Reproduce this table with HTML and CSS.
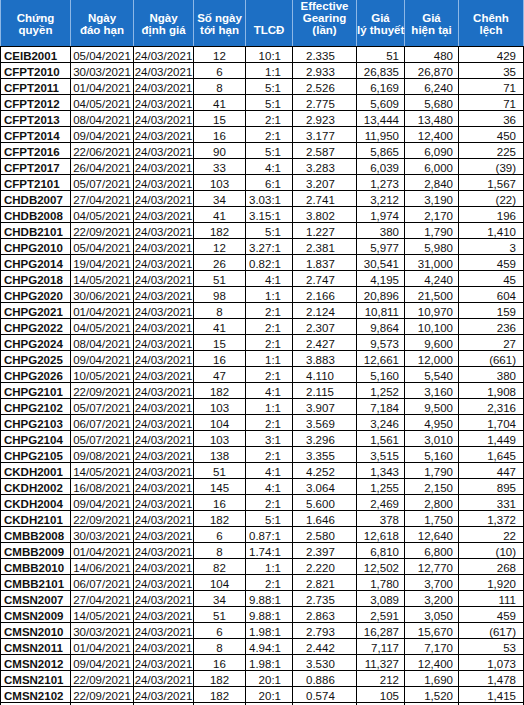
FILE: index.html
```html
<!DOCTYPE html>
<html lang="vi">
<head>
<meta charset="utf-8">
<title>Chứng quyền</title>
<link rel="stylesheet" href="styles.css">
</head>
<body>
<table class="cw">
<colgroup>
<col class="c1"><col class="c2"><col class="c3"><col class="c4"><col class="c5"><col class="c6"><col class="c7"><col class="c8"><col class="c9">
</colgroup>
<thead>
<tr>
<th>Chứng<br>quyền</th>
<th>Ngày<br>đáo hạn</th>
<th>Ngày<br>định giá</th>
<th>Số ngày<br>tới hạn</th>
<th>TLCĐ</th>
<th>Effective<br>Gearing<br>(lần)</th>
<th>Giá<br>lý thuyết</th>
<th>Giá<br>hiện tại</th>
<th>Chênh<br>lệch</th>
</tr>
</thead>
<tbody>
<tr><td class="code">CEIB2001</td><td class="ctr">05/04/2021</td><td class="ctr">24/03/2021</td><td class="ctr">12</td><td class="ratio">10:1</td><td class="gear">2.335</td><td class="num">51</td><td class="num">480</td><td class="num diff">429</td></tr>
<tr><td class="code">CFPT2010</td><td class="ctr">30/03/2021</td><td class="ctr">24/03/2021</td><td class="ctr">6</td><td class="ratio">1:1</td><td class="gear">2.933</td><td class="num">26,835</td><td class="num">26,870</td><td class="num diff">35</td></tr>
<tr><td class="code">CFPT2011</td><td class="ctr">01/04/2021</td><td class="ctr">24/03/2021</td><td class="ctr">8</td><td class="ratio">5:1</td><td class="gear">2.526</td><td class="num">6,169</td><td class="num">6,240</td><td class="num diff">71</td></tr>
<tr><td class="code">CFPT2012</td><td class="ctr">04/05/2021</td><td class="ctr">24/03/2021</td><td class="ctr">41</td><td class="ratio">5:1</td><td class="gear">2.775</td><td class="num">5,609</td><td class="num">5,680</td><td class="num diff">71</td></tr>
<tr><td class="code">CFPT2013</td><td class="ctr">08/04/2021</td><td class="ctr">24/03/2021</td><td class="ctr">15</td><td class="ratio">2:1</td><td class="gear">2.923</td><td class="num">13,444</td><td class="num">13,480</td><td class="num diff">36</td></tr>
<tr><td class="code">CFPT2014</td><td class="ctr">09/04/2021</td><td class="ctr">24/03/2021</td><td class="ctr">16</td><td class="ratio">2:1</td><td class="gear">3.177</td><td class="num">11,950</td><td class="num">12,400</td><td class="num diff">450</td></tr>
<tr><td class="code">CFPT2016</td><td class="ctr">22/06/2021</td><td class="ctr">24/03/2021</td><td class="ctr">90</td><td class="ratio">5:1</td><td class="gear">2.587</td><td class="num">5,865</td><td class="num">6,090</td><td class="num diff">225</td></tr>
<tr><td class="code">CFPT2017</td><td class="ctr">26/04/2021</td><td class="ctr">24/03/2021</td><td class="ctr">33</td><td class="ratio">4:1</td><td class="gear">3.283</td><td class="num">6,039</td><td class="num">6,000</td><td class="num diff">(39)</td></tr>
<tr><td class="code">CFPT2101</td><td class="ctr">05/07/2021</td><td class="ctr">24/03/2021</td><td class="ctr">103</td><td class="ratio">6:1</td><td class="gear">3.207</td><td class="num">1,273</td><td class="num">2,840</td><td class="num diff">1,567</td></tr>
<tr><td class="code">CHDB2007</td><td class="ctr">27/04/2021</td><td class="ctr">24/03/2021</td><td class="ctr">34</td><td class="ratio">3.03:1</td><td class="gear">2.741</td><td class="num">3,212</td><td class="num">3,190</td><td class="num diff">(22)</td></tr>
<tr><td class="code">CHDB2008</td><td class="ctr">04/05/2021</td><td class="ctr">24/03/2021</td><td class="ctr">41</td><td class="ratio">3.15:1</td><td class="gear">3.802</td><td class="num">1,974</td><td class="num">2,170</td><td class="num diff">196</td></tr>
<tr><td class="code">CHDB2101</td><td class="ctr">22/09/2021</td><td class="ctr">24/03/2021</td><td class="ctr">182</td><td class="ratio">5:1</td><td class="gear">1.227</td><td class="num">380</td><td class="num">1,790</td><td class="num diff">1,410</td></tr>
<tr><td class="code">CHPG2010</td><td class="ctr">05/04/2021</td><td class="ctr">24/03/2021</td><td class="ctr">12</td><td class="ratio">3.27:1</td><td class="gear">2.381</td><td class="num">5,977</td><td class="num">5,980</td><td class="num diff">3</td></tr>
<tr><td class="code">CHPG2014</td><td class="ctr">19/04/2021</td><td class="ctr">24/03/2021</td><td class="ctr">26</td><td class="ratio">0.82:1</td><td class="gear">1.837</td><td class="num">30,541</td><td class="num">31,000</td><td class="num diff">459</td></tr>
<tr><td class="code">CHPG2018</td><td class="ctr">14/05/2021</td><td class="ctr">24/03/2021</td><td class="ctr">51</td><td class="ratio">4:1</td><td class="gear">2.747</td><td class="num">4,195</td><td class="num">4,240</td><td class="num diff">45</td></tr>
<tr><td class="code">CHPG2020</td><td class="ctr">30/06/2021</td><td class="ctr">24/03/2021</td><td class="ctr">98</td><td class="ratio">1:1</td><td class="gear">2.166</td><td class="num">20,896</td><td class="num">21,500</td><td class="num diff">604</td></tr>
<tr><td class="code">CHPG2021</td><td class="ctr">01/04/2021</td><td class="ctr">24/03/2021</td><td class="ctr">8</td><td class="ratio">2:1</td><td class="gear">2.124</td><td class="num">10,811</td><td class="num">10,970</td><td class="num diff">159</td></tr>
<tr><td class="code">CHPG2022</td><td class="ctr">04/05/2021</td><td class="ctr">24/03/2021</td><td class="ctr">41</td><td class="ratio">2:1</td><td class="gear">2.307</td><td class="num">9,864</td><td class="num">10,100</td><td class="num diff">236</td></tr>
<tr><td class="code">CHPG2024</td><td class="ctr">08/04/2021</td><td class="ctr">24/03/2021</td><td class="ctr">15</td><td class="ratio">2:1</td><td class="gear">2.427</td><td class="num">9,573</td><td class="num">9,600</td><td class="num diff">27</td></tr>
<tr><td class="code">CHPG2025</td><td class="ctr">09/04/2021</td><td class="ctr">24/03/2021</td><td class="ctr">16</td><td class="ratio">1:1</td><td class="gear">3.883</td><td class="num">12,661</td><td class="num">12,000</td><td class="num diff">(661)</td></tr>
<tr><td class="code">CHPG2026</td><td class="ctr">10/05/2021</td><td class="ctr">24/03/2021</td><td class="ctr">47</td><td class="ratio">2:1</td><td class="gear">4.110</td><td class="num">5,160</td><td class="num">5,540</td><td class="num diff">380</td></tr>
<tr><td class="code">CHPG2101</td><td class="ctr">22/09/2021</td><td class="ctr">24/03/2021</td><td class="ctr">182</td><td class="ratio">4:1</td><td class="gear">2.115</td><td class="num">1,252</td><td class="num">3,160</td><td class="num diff">1,908</td></tr>
<tr><td class="code">CHPG2102</td><td class="ctr">05/07/2021</td><td class="ctr">24/03/2021</td><td class="ctr">103</td><td class="ratio">1:1</td><td class="gear">3.907</td><td class="num">7,184</td><td class="num">9,500</td><td class="num diff">2,316</td></tr>
<tr><td class="code">CHPG2103</td><td class="ctr">06/07/2021</td><td class="ctr">24/03/2021</td><td class="ctr">104</td><td class="ratio">2:1</td><td class="gear">3.569</td><td class="num">3,246</td><td class="num">4,950</td><td class="num diff">1,704</td></tr>
<tr><td class="code">CHPG2104</td><td class="ctr">05/07/2021</td><td class="ctr">24/03/2021</td><td class="ctr">103</td><td class="ratio">3:1</td><td class="gear">3.296</td><td class="num">1,561</td><td class="num">3,010</td><td class="num diff">1,449</td></tr>
<tr><td class="code">CHPG2105</td><td class="ctr">09/08/2021</td><td class="ctr">24/03/2021</td><td class="ctr">138</td><td class="ratio">2:1</td><td class="gear">3.355</td><td class="num">3,515</td><td class="num">5,160</td><td class="num diff">1,645</td></tr>
<tr><td class="code">CKDH2001</td><td class="ctr">14/05/2021</td><td class="ctr">24/03/2021</td><td class="ctr">51</td><td class="ratio">4:1</td><td class="gear">4.252</td><td class="num">1,343</td><td class="num">1,790</td><td class="num diff">447</td></tr>
<tr><td class="code">CKDH2002</td><td class="ctr">16/08/2021</td><td class="ctr">24/03/2021</td><td class="ctr">145</td><td class="ratio">4:1</td><td class="gear">3.064</td><td class="num">1,255</td><td class="num">2,150</td><td class="num diff">895</td></tr>
<tr><td class="code">CKDH2004</td><td class="ctr">09/04/2021</td><td class="ctr">24/03/2021</td><td class="ctr">16</td><td class="ratio">2:1</td><td class="gear">5.600</td><td class="num">2,469</td><td class="num">2,800</td><td class="num diff">331</td></tr>
<tr><td class="code">CKDH2101</td><td class="ctr">22/09/2021</td><td class="ctr">24/03/2021</td><td class="ctr">182</td><td class="ratio">5:1</td><td class="gear">1.646</td><td class="num">378</td><td class="num">1,750</td><td class="num diff">1,372</td></tr>
<tr><td class="code">CMBB2008</td><td class="ctr">30/03/2021</td><td class="ctr">24/03/2021</td><td class="ctr">6</td><td class="ratio">0.87:1</td><td class="gear">2.580</td><td class="num">12,618</td><td class="num">12,640</td><td class="num diff">22</td></tr>
<tr><td class="code">CMBB2009</td><td class="ctr">01/04/2021</td><td class="ctr">24/03/2021</td><td class="ctr">8</td><td class="ratio">1.74:1</td><td class="gear">2.397</td><td class="num">6,810</td><td class="num">6,800</td><td class="num diff">(10)</td></tr>
<tr><td class="code">CMBB2010</td><td class="ctr">14/06/2021</td><td class="ctr">24/03/2021</td><td class="ctr">82</td><td class="ratio">1:1</td><td class="gear">2.220</td><td class="num">12,502</td><td class="num">12,770</td><td class="num diff">268</td></tr>
<tr><td class="code">CMBB2101</td><td class="ctr">06/07/2021</td><td class="ctr">24/03/2021</td><td class="ctr">104</td><td class="ratio">2:1</td><td class="gear">2.821</td><td class="num">1,780</td><td class="num">3,700</td><td class="num diff">1,920</td></tr>
<tr><td class="code">CMSN2007</td><td class="ctr">27/04/2021</td><td class="ctr">24/03/2021</td><td class="ctr">34</td><td class="ratio">9.88:1</td><td class="gear">2.735</td><td class="num">3,089</td><td class="num">3,200</td><td class="num diff">111</td></tr>
<tr><td class="code">CMSN2009</td><td class="ctr">14/05/2021</td><td class="ctr">24/03/2021</td><td class="ctr">51</td><td class="ratio">9.88:1</td><td class="gear">2.863</td><td class="num">2,591</td><td class="num">3,050</td><td class="num diff">459</td></tr>
<tr><td class="code">CMSN2010</td><td class="ctr">30/03/2021</td><td class="ctr">24/03/2021</td><td class="ctr">6</td><td class="ratio">1.98:1</td><td class="gear">2.793</td><td class="num">16,287</td><td class="num">15,670</td><td class="num diff">(617)</td></tr>
<tr><td class="code">CMSN2011</td><td class="ctr">01/04/2021</td><td class="ctr">24/03/2021</td><td class="ctr">8</td><td class="ratio">4.94:1</td><td class="gear">2.442</td><td class="num">7,117</td><td class="num">7,170</td><td class="num diff">53</td></tr>
<tr><td class="code">CMSN2012</td><td class="ctr">09/04/2021</td><td class="ctr">24/03/2021</td><td class="ctr">16</td><td class="ratio">1.98:1</td><td class="gear">3.530</td><td class="num">11,327</td><td class="num">12,400</td><td class="num diff">1,073</td></tr>
<tr><td class="code">CMSN2101</td><td class="ctr">22/09/2021</td><td class="ctr">24/03/2021</td><td class="ctr">182</td><td class="ratio">20:1</td><td class="gear">0.886</td><td class="num">212</td><td class="num">1,690</td><td class="num diff">1,478</td></tr>
<tr><td class="code">CMSN2102</td><td class="ctr">22/09/2021</td><td class="ctr">24/03/2021</td><td class="ctr">182</td><td class="ratio">20:1</td><td class="gear">0.574</td><td class="num">105</td><td class="num">1,520</td><td class="num diff">1,415</td></tr>
<tr><td class="code"></td><td class="ctr"></td><td class="ctr"></td><td class="ctr"></td><td class="ratio"></td><td class="gear"></td><td class="num"></td><td class="num"></td><td class="num diff"></td></tr>
</tbody>
</table>
</body>
</html>
```
FILE: styles.css
```css
html, body {
  margin: 0;
  padding: 0;
  background: #ffffff;
  overflow: hidden;
}

.cw {
  border-collapse: collapse;
  table-layout: fixed;
  width: 523px;
  font-family: "Liberation Sans", Arial, sans-serif;
  font-size: 11.5px;
  color: #111111;
}

.c1 { width: 70px; }
.c2 { width: 63px; }
.c3 { width: 60px; }
.c4 { width: 52px; }
.c5 { width: 47px; }
.c6 { width: 64px; }
.c7 { width: 48px; }
.c8 { width: 54px; }
.c9 { width: 65px; }

.cw th {
  background: #1d6fc4;
  color: #ffffff;
  font-weight: bold;
  text-align: center;
  vertical-align: bottom;
  line-height: 12px;
  height: 35px;
  padding: 0 0 10px 0;
  border-left: 1px solid #8db7e6;
  border-right: 1px solid #8db7e6;
  border-bottom: 1px solid #000000;
  white-space: nowrap;
}

.cw td {
  height: 15px;
  padding: 0;
  line-height: 11px;
  vertical-align: bottom;
  border: 1px solid #000000;
  white-space: nowrap;
  overflow: hidden;
}

.cw td.code {
  font-weight: bold;
  text-align: left;
  padding-left: 3px;
}

.cw td.ctr {
  text-align: center;
}

.cw td.ratio {
  text-align: right;
  padding-right: 11px;
}

.cw td.gear {
  text-align: left;
  padding-left: 13px;
}

.cw td.num {
  text-align: right;
  padding-right: 5px;
}

.cw td.diff {
  padding-right: 7px;
}
```
